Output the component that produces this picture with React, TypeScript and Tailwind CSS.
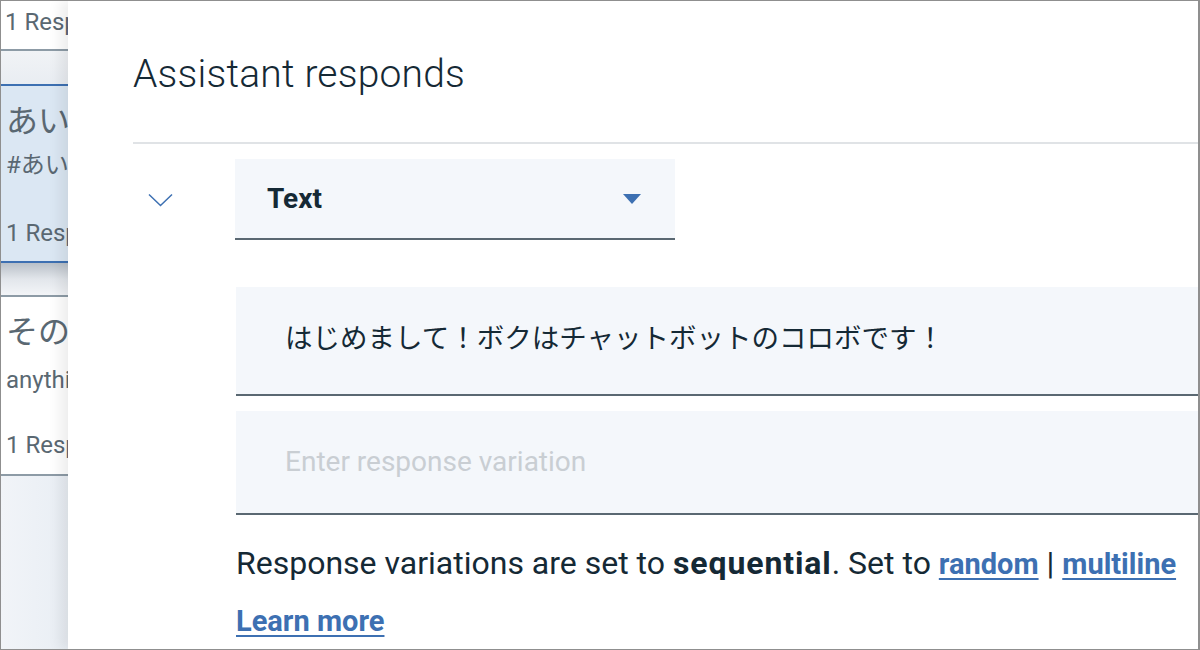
import React from "react";

const sans = { fontFamily: '"Roboto", "Noto Sans CJK JP", sans-serif' };

export default function App() {
  return (
    <div
      className="w-[1200px] h-[650px] box-border border border-r-2 border-[#8f8f8f] flex overflow-hidden bg-white text-[#152935]"
      style={sans}
    >
      {/* Left list panel */}
      <div className="w-[67px] shrink-0 flex flex-col overflow-hidden bg-[#eef2f7] text-[#5a6872] whitespace-nowrap">
        <div className="h-[50px] shrink-0 bg-white border-b-2 border-[#8d9ba6] pl-[4px]">
          <div className="pt-[6px] leading-[30px] text-[24px]">1 Response</div>
        </div>
        <div className="h-[33px] shrink-0 bg-gradient-to-b from-[#f1f3f6] to-[#e9edf2]" />
        <div className="h-[179px] shrink-0 bg-[#dbe7f3] border-t-2 border-b-2 border-[#3d70b2] pl-[5px] flex flex-col">
          <div className="mt-[16px] leading-[38px] text-[32px]">あいさつ</div>
          <div className="mt-[10px] leading-[30px] text-[24px]">#あいさつ</div>
          <div className="mt-[38px] leading-[30px] text-[24px]">1 Response</div>
        </div>
        <div className="h-[32px] shrink-0 bg-gradient-to-b from-[#b9c0c8] via-[#e2e6eb] to-[#f3f5f8]" />
        <div className="h-[181px] shrink-0 bg-white border-t-2 border-b-2 border-[#8d9ba6] pl-[5px] flex flex-col">
          <div className="mt-[16px] leading-[38px] text-[32px]">その他</div>
          <div className="mt-[14px] leading-[30px] text-[24px]">anything_else</div>
          <div className="mt-[35px] leading-[30px] text-[24px]">1 Response</div>
        </div>
        <div className="flex-1 bg-gradient-to-r from-[#f1f4f8] to-[#e9eef4]" />
      </div>

      {/* Main panel */}
      <div className="relative z-10 flex-1 bg-white shadow-[-8px_0_12px_rgba(0,0,0,0.07)] overflow-hidden flex flex-col pl-[65px]">
        <div className="h-[141px] shrink-0">
          <h1 className="pt-[50px] leading-[46px] text-[39px] font-light tracking-[0.2px] text-[#152935] whitespace-nowrap">
            Assistant responds
          </h1>
        </div>
        <div className="h-[2px] shrink-0 bg-[#e0e3e6]" />

        <div className="mt-[15px] flex">
          <div className="w-[102px] shrink-0 flex items-center pl-[15px]">
            <svg width="25" height="14" viewBox="0 0 25 14" fill="none">
              <path d="M1 1.5 L12.5 12.5 L24 1.5" stroke="#3d70b2" strokeWidth="1.5" />
            </svg>
          </div>
          <div className="w-[440px] h-[81px] box-border bg-[#f4f7fb] border-b-2 border-[#5a6872] flex items-center justify-between pl-[32px] pr-[34px]">
            <span className="text-[28px] font-bold text-[#152935] leading-[30px]">Text</span>
            <svg width="18" height="10" viewBox="0 0 18 10">
              <path d="M0 0 L18 0 L9 10 Z" fill="#3d70b2" />
            </svg>
          </div>
        </div>

        <div className="ml-[103px] flex flex-col">
          <div className="mt-[47px] h-[109px] box-border bg-[#f4f7fb] border-b-2 border-[#5a6872] flex items-center pl-[49px] -mr-[20px]">
            <span className="text-[27.5px] leading-[36px] text-[#152935] whitespace-nowrap pb-[3px]">
              はじめまして！ボクはチャットボットのコロボです！
            </span>
          </div>
          <div className="mt-[15px] h-[104px] box-border bg-[#f4f7fb] border-b-2 border-[#5a6872] flex items-center pl-[49px] -mr-[20px]">
            <span className="text-[28px] leading-[36px] text-[#c9ced3] whitespace-nowrap">
              Enter response variation
            </span>
          </div>
          <div className="mt-[30px] text-[32px] leading-[36px] text-[#152935] whitespace-nowrap">
            Response variations are set to{" "}
            <span className="font-bold tracking-[0.9px]">sequential</span>. Set to{" "}
            <a className="text-[29px] font-bold text-[#3d70b2] underline underline-offset-4 decoration-2">random</a> |{" "}
            <a className="text-[29px] font-bold text-[#3d70b2] underline underline-offset-4 decoration-2">multiline</a>
          </div>
          <div className="mt-[21px] text-[29px] leading-[36px] whitespace-nowrap">
            <a className="font-bold text-[#3d70b2] underline underline-offset-4 decoration-2">Learn more</a>
          </div>
        </div>
      </div>
    </div>
  );
}
